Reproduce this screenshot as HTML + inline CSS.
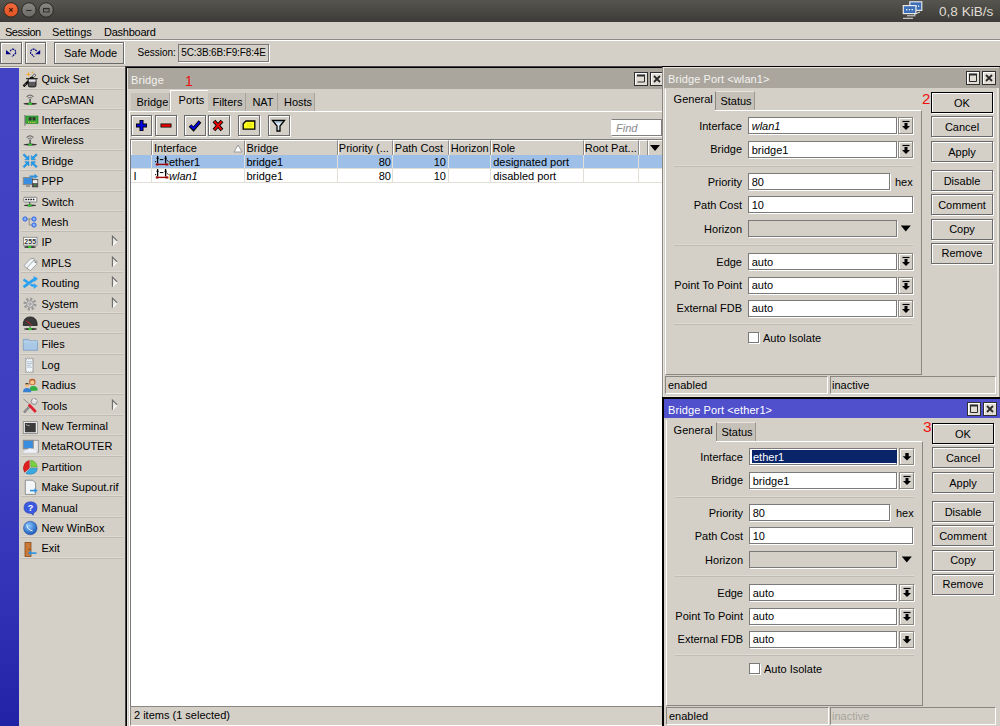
<!DOCTYPE html><html><head><meta charset="utf-8"><style>
*{margin:0;padding:0;box-sizing:border-box}
html,body{width:1000px;height:726px;overflow:hidden;background:#d4d0c8;font-family:"Liberation Sans", sans-serif;font-size:11px;color:#000}
.t{position:absolute;white-space:pre;line-height:12px;height:12px}
.btn{position:absolute;border:1px solid #6a6a6a;box-shadow:inset 1px 1px 0 #fff,1px 1px 0 #fff;background:#d4d0c8}
.inp{position:absolute;background:#fff;border:1px solid #7a7a7a;box-shadow:1px 1px 0 #fff}
.sep{position:absolute;height:1px;background:#c0bcb4;box-shadow:0 -1px 0 #dddad3}
</style></head><body>
<div style="position:absolute;left:0px;top:0px;width:1000px;height:22px;background:linear-gradient(#57554f,#3c3b37)"></div>
<svg style="position:absolute;left:0;top:0" width="60" height="21"><defs><linearGradient id="rc" x1="0" y1="0" x2="0" y2="1"><stop offset="0" stop-color="#f06a3e"/><stop offset="1" stop-color="#e2521f"/></linearGradient><linearGradient id="gc" x1="0" y1="0" x2="0" y2="1"><stop offset="0" stop-color="#8a8985"/><stop offset="1" stop-color="#6a6965"/></linearGradient></defs><circle cx="11" cy="9.9" r="7.2" fill="url(#rc)" stroke="#2a2926" stroke-width="1"/><path d="M9.3 8.2l3.4 3.4M12.7 8.2l-3.4 3.4" stroke="#3a1a0a" stroke-width="1.1"/><circle cx="28.9" cy="10" r="7.2" fill="url(#gc)" stroke="#2a2926" stroke-width="1"/><path d="M26.2 10.5h5.4" stroke="#2e2d2a" stroke-width="1.1"/><circle cx="46.1" cy="10" r="7.2" fill="url(#gc)" stroke="#2a2926" stroke-width="1"/><rect x="43.5" y="8.5" width="5.6" height="3.4" fill="none" stroke="#2e2d2a" stroke-width="1"/><path d="M43.5 8.6h5.6" stroke="#2e2d2a" stroke-width="1.4"/></svg>
<svg style="position:absolute;left:900px;top:0px" width="26" height="21"><rect x="9.8" y="1.8" width="12" height="8.6" fill="#3d6fb8" stroke="#e4e4e4" stroke-width="1.2"/><path d="M13 6.2h1.2M15.5 6.2h1.2M18 6.2h1.2" stroke="#fff" stroke-width="1.2"/><rect x="3.3" y="5.6" width="12.6" height="8" fill="#3d6fb8" stroke="#e8e8e8" stroke-width="1.2"/><path d="M6 9.6h1.3M8.8 9.6h1.3M11.6 9.6h1.3" stroke="#fff" stroke-width="1.3"/><path d="M3 18.3h10M7 15.8h8.5M14 14.5l6-2.5" stroke="#e0e0e0" stroke-width="1"/></svg>
<div class="t" style="left:939px;top:4.5px;color:#dfdbd2;font-size:13.6px;line-height:14px;height:14px">0,8 KiB/s</div>
<div style="position:absolute;left:0px;top:39px;width:1000px;height:1px;background:#8c8a86"></div>
<div style="position:absolute;left:0px;top:40px;width:1000px;height:1px;background:#fff"></div>
<div class="t" style="left:5px;top:26px;letter-spacing:-0.5px">Session</div>
<div class="t" style="left:52px;top:26px;">Settings</div>
<div class="t" style="left:104px;top:26px;letter-spacing:-0.25px">Dashboard</div>
<div class="btn" style="left:0px;top:42px;width:22px;height:22px;box-shadow:inset 1px 1px 0 #fff,1px 0 0 #fff"></div>
<div class="btn" style="left:25px;top:42px;width:21px;height:22px;box-shadow:inset 1px 1px 0 #fff,1px 0 0 #fff"></div>
<svg style="position:absolute;left:0;top:40px" width="50" height="26"><path d="M6 10 L6 14.3 L11.2 14.3 Z" fill="#000080"/><path d="M10.2 11.2 Q11.5 9 13 9.2 Q15.6 9.6 15.6 12 L15.6 13.2 L12 16.8" fill="none" stroke="#000080" stroke-width="1.2" stroke-dasharray="2 0.7"/><path d="M40.2 10 L40.2 14.3 L35 14.3 Z" fill="#000080"/><path d="M36.6 11.2 Q35 9 33.5 9.2 Q30.6 9.6 30.6 12 L30.6 13.2 L34.2 16.8" fill="none" stroke="#000080" stroke-width="1.2" stroke-dasharray="2 0.7"/></svg>
<div class="btn" style="left:54px;top:42px;width:70px;height:22px;box-shadow:inset 1px 1px 0 #fff,1px 0 0 #fff"></div>
<div class="t" style="left:64px;top:47px;">Safe Mode</div>
<div class="t" style="left:137.5px;top:47.4px;font-size:10px">Session:</div>
<div style="position:absolute;left:178px;top:44px;width:91px;height:18px;border:1px solid #7a7a7a;box-shadow:1px 1px 0 #fff"></div>
<div class="t" style="left:181.3px;top:47.4px;font-size:10px;letter-spacing:-0.13px">5C:3B:6B:F9:F8:4E</div>
<div style="position:absolute;left:0px;top:66px;width:1000px;height:1px;background:#9c9890"></div>
<div style="position:absolute;left:0px;top:67px;width:1000px;height:1px;background:#ebe8e2"></div>
<div style="position:absolute;left:0px;top:68px;width:19px;height:658px;background:linear-gradient(#4343c5 0%,#3e3ec0 60%,#3030b5 83%,#2222a6 100%)"></div>
<div class="t" style="left:41.5px;top:73.1px;">Quick Set</div>
<div style="position:absolute;left:21px;top:88px;width:102px;height:1px;background:#dddad3"></div>
<div style="position:absolute;left:21px;top:89px;width:102px;height:1px;background:#c0bcb4"></div>
<div class="ic" data-k="0" style="position:absolute;left:23px;top:71.6px;width:16px;height:15px"></div>
<div class="t" style="left:41.5px;top:93.5px;">CAPsMAN</div>
<div style="position:absolute;left:21px;top:108px;width:102px;height:1px;background:#dddad3"></div>
<div style="position:absolute;left:21px;top:109px;width:102px;height:1px;background:#c0bcb4"></div>
<div class="ic" data-k="1" style="position:absolute;left:23px;top:92.0px;width:16px;height:15px"></div>
<div class="t" style="left:41.5px;top:113.9px;">Interfaces</div>
<div style="position:absolute;left:21px;top:128px;width:102px;height:1px;background:#dddad3"></div>
<div style="position:absolute;left:21px;top:129px;width:102px;height:1px;background:#c0bcb4"></div>
<div class="ic" data-k="2" style="position:absolute;left:23px;top:112.4px;width:16px;height:15px"></div>
<div class="t" style="left:41.5px;top:134.3px;">Wireless</div>
<div style="position:absolute;left:21px;top:149px;width:102px;height:1px;background:#dddad3"></div>
<div style="position:absolute;left:21px;top:150px;width:102px;height:1px;background:#c0bcb4"></div>
<div class="ic" data-k="3" style="position:absolute;left:23px;top:132.8px;width:16px;height:15px"></div>
<div class="t" style="left:41.5px;top:154.7px;">Bridge</div>
<div style="position:absolute;left:21px;top:169px;width:102px;height:1px;background:#dddad3"></div>
<div style="position:absolute;left:21px;top:170px;width:102px;height:1px;background:#c0bcb4"></div>
<div class="ic" data-k="4" style="position:absolute;left:23px;top:153.2px;width:16px;height:15px"></div>
<div class="t" style="left:41.5px;top:175.1px;">PPP</div>
<div style="position:absolute;left:21px;top:190px;width:102px;height:1px;background:#dddad3"></div>
<div style="position:absolute;left:21px;top:191px;width:102px;height:1px;background:#c0bcb4"></div>
<div class="ic" data-k="5" style="position:absolute;left:23px;top:173.6px;width:16px;height:15px"></div>
<div class="t" style="left:41.5px;top:195.5px;">Switch</div>
<div style="position:absolute;left:21px;top:210px;width:102px;height:1px;background:#dddad3"></div>
<div style="position:absolute;left:21px;top:211px;width:102px;height:1px;background:#c0bcb4"></div>
<div class="ic" data-k="6" style="position:absolute;left:23px;top:194.0px;width:16px;height:15px"></div>
<div class="t" style="left:41.5px;top:215.9px;">Mesh</div>
<div style="position:absolute;left:21px;top:230px;width:102px;height:1px;background:#dddad3"></div>
<div style="position:absolute;left:21px;top:231px;width:102px;height:1px;background:#c0bcb4"></div>
<div class="ic" data-k="7" style="position:absolute;left:23px;top:214.4px;width:16px;height:15px"></div>
<div class="t" style="left:41.5px;top:236.3px;">IP</div>
<div style="position:absolute;left:21px;top:251px;width:102px;height:1px;background:#dddad3"></div>
<div style="position:absolute;left:21px;top:252px;width:102px;height:1px;background:#c0bcb4"></div>
<svg style="position:absolute;left:110px;top:235.3px" width="10" height="13"><path d="M2.4 1.1 L7.2 5.9 L2.4 10.8 Z" fill="#ebe8e2"/><path d="M7.2 5.9 L2.6 10.6" stroke="#fff" stroke-width="1.1"/><path d="M2.4 10.8 L2.4 1.1 L7.2 5.9" fill="none" stroke="#6a6a6a" stroke-width="1.1"/></svg>
<div class="ic" data-k="8" style="position:absolute;left:23px;top:234.8px;width:16px;height:15px"></div>
<div class="t" style="left:41.5px;top:256.7px;">MPLS</div>
<div style="position:absolute;left:21px;top:271px;width:102px;height:1px;background:#dddad3"></div>
<div style="position:absolute;left:21px;top:272px;width:102px;height:1px;background:#c0bcb4"></div>
<svg style="position:absolute;left:110px;top:255.7px" width="10" height="13"><path d="M2.4 1.1 L7.2 5.9 L2.4 10.8 Z" fill="#ebe8e2"/><path d="M7.2 5.9 L2.6 10.6" stroke="#fff" stroke-width="1.1"/><path d="M2.4 10.8 L2.4 1.1 L7.2 5.9" fill="none" stroke="#6a6a6a" stroke-width="1.1"/></svg>
<div class="ic" data-k="9" style="position:absolute;left:23px;top:255.2px;width:16px;height:15px"></div>
<div class="t" style="left:41.5px;top:277.1px;">Routing</div>
<div style="position:absolute;left:21px;top:292px;width:102px;height:1px;background:#dddad3"></div>
<div style="position:absolute;left:21px;top:293px;width:102px;height:1px;background:#c0bcb4"></div>
<svg style="position:absolute;left:110px;top:276.1px" width="10" height="13"><path d="M2.4 1.1 L7.2 5.9 L2.4 10.8 Z" fill="#ebe8e2"/><path d="M7.2 5.9 L2.6 10.6" stroke="#fff" stroke-width="1.1"/><path d="M2.4 10.8 L2.4 1.1 L7.2 5.9" fill="none" stroke="#6a6a6a" stroke-width="1.1"/></svg>
<div class="ic" data-k="10" style="position:absolute;left:23px;top:275.6px;width:16px;height:15px"></div>
<div class="t" style="left:41.5px;top:297.5px;">System</div>
<div style="position:absolute;left:21px;top:312px;width:102px;height:1px;background:#dddad3"></div>
<div style="position:absolute;left:21px;top:313px;width:102px;height:1px;background:#c0bcb4"></div>
<svg style="position:absolute;left:110px;top:296.5px" width="10" height="13"><path d="M2.4 1.1 L7.2 5.9 L2.4 10.8 Z" fill="#ebe8e2"/><path d="M7.2 5.9 L2.6 10.6" stroke="#fff" stroke-width="1.1"/><path d="M2.4 10.8 L2.4 1.1 L7.2 5.9" fill="none" stroke="#6a6a6a" stroke-width="1.1"/></svg>
<div class="ic" data-k="11" style="position:absolute;left:23px;top:296.0px;width:16px;height:15px"></div>
<div class="t" style="left:41.5px;top:317.9px;">Queues</div>
<div style="position:absolute;left:21px;top:332px;width:102px;height:1px;background:#dddad3"></div>
<div style="position:absolute;left:21px;top:333px;width:102px;height:1px;background:#c0bcb4"></div>
<div class="ic" data-k="12" style="position:absolute;left:23px;top:316.4px;width:16px;height:15px"></div>
<div class="t" style="left:41.5px;top:338.3px;">Files</div>
<div style="position:absolute;left:21px;top:353px;width:102px;height:1px;background:#dddad3"></div>
<div style="position:absolute;left:21px;top:354px;width:102px;height:1px;background:#c0bcb4"></div>
<div class="ic" data-k="13" style="position:absolute;left:23px;top:336.8px;width:16px;height:15px"></div>
<div class="t" style="left:41.5px;top:358.7px;">Log</div>
<div style="position:absolute;left:21px;top:373px;width:102px;height:1px;background:#dddad3"></div>
<div style="position:absolute;left:21px;top:374px;width:102px;height:1px;background:#c0bcb4"></div>
<div class="ic" data-k="14" style="position:absolute;left:23px;top:357.2px;width:16px;height:15px"></div>
<div class="t" style="left:41.5px;top:379.1px;">Radius</div>
<div style="position:absolute;left:21px;top:393px;width:102px;height:1px;background:#dddad3"></div>
<div style="position:absolute;left:21px;top:394px;width:102px;height:1px;background:#c0bcb4"></div>
<div class="ic" data-k="15" style="position:absolute;left:23px;top:377.6px;width:16px;height:15px"></div>
<div class="t" style="left:41.5px;top:399.5px;">Tools</div>
<div style="position:absolute;left:21px;top:414px;width:102px;height:1px;background:#dddad3"></div>
<div style="position:absolute;left:21px;top:415px;width:102px;height:1px;background:#c0bcb4"></div>
<svg style="position:absolute;left:110px;top:398.5px" width="10" height="13"><path d="M2.4 1.1 L7.2 5.9 L2.4 10.8 Z" fill="#ebe8e2"/><path d="M7.2 5.9 L2.6 10.6" stroke="#fff" stroke-width="1.1"/><path d="M2.4 10.8 L2.4 1.1 L7.2 5.9" fill="none" stroke="#6a6a6a" stroke-width="1.1"/></svg>
<div class="ic" data-k="16" style="position:absolute;left:23px;top:398.0px;width:16px;height:15px"></div>
<div class="t" style="left:41.5px;top:419.9px;">New Terminal</div>
<div style="position:absolute;left:21px;top:434px;width:102px;height:1px;background:#dddad3"></div>
<div style="position:absolute;left:21px;top:435px;width:102px;height:1px;background:#c0bcb4"></div>
<div class="ic" data-k="17" style="position:absolute;left:23px;top:418.4px;width:16px;height:15px"></div>
<div class="t" style="left:41.5px;top:440.3px;">MetaROUTER</div>
<div style="position:absolute;left:21px;top:455px;width:102px;height:1px;background:#dddad3"></div>
<div style="position:absolute;left:21px;top:456px;width:102px;height:1px;background:#c0bcb4"></div>
<div class="ic" data-k="18" style="position:absolute;left:23px;top:438.8px;width:16px;height:15px"></div>
<div class="t" style="left:41.5px;top:460.7px;">Partition</div>
<div style="position:absolute;left:21px;top:475px;width:102px;height:1px;background:#dddad3"></div>
<div style="position:absolute;left:21px;top:476px;width:102px;height:1px;background:#c0bcb4"></div>
<div class="ic" data-k="19" style="position:absolute;left:23px;top:459.2px;width:16px;height:15px"></div>
<div class="t" style="left:41.5px;top:481.1px;">Make Supout.rif</div>
<div style="position:absolute;left:21px;top:495px;width:102px;height:1px;background:#dddad3"></div>
<div style="position:absolute;left:21px;top:496px;width:102px;height:1px;background:#c0bcb4"></div>
<div class="ic" data-k="20" style="position:absolute;left:23px;top:479.6px;width:16px;height:15px"></div>
<div class="t" style="left:41.5px;top:501.5px;">Manual</div>
<div style="position:absolute;left:21px;top:516px;width:102px;height:1px;background:#dddad3"></div>
<div style="position:absolute;left:21px;top:517px;width:102px;height:1px;background:#c0bcb4"></div>
<div class="ic" data-k="21" style="position:absolute;left:23px;top:500.0px;width:16px;height:15px"></div>
<div class="t" style="left:41.5px;top:521.9px;">New WinBox</div>
<div style="position:absolute;left:21px;top:536px;width:102px;height:1px;background:#dddad3"></div>
<div style="position:absolute;left:21px;top:537px;width:102px;height:1px;background:#c0bcb4"></div>
<div class="ic" data-k="22" style="position:absolute;left:23px;top:520.4px;width:16px;height:15px"></div>
<div class="t" style="left:41.5px;top:542.3px;">Exit</div>
<div style="position:absolute;left:21px;top:557px;width:102px;height:1px;background:#dddad3"></div>
<div style="position:absolute;left:21px;top:558px;width:102px;height:1px;background:#c0bcb4"></div>
<div class="ic" data-k="23" style="position:absolute;left:23px;top:540.8px;width:16px;height:15px"></div>
<svg style="position:absolute;left:0;top:0" width="60" height="570"><g transform="translate(20,68.6)"><path d="M8.5 3.2 L9.3 5.2 L11.2 5.8 L9.3 6.5 L8.5 8.5 L7.7 6.5 L5.8 5.8 L7.7 5.2 Z" fill="#f0a830"/><circle cx="12.3" cy="3.8" r="0.8" fill="#f0a030"/><path d="M3.6 17.6 L15.4 5.8" stroke="#111" stroke-width="2.3"/><path d="M4.6 16.6 L5.4 15.8 M6.6 14.6 L7.4 13.8" stroke="#fff" stroke-width="0.8"/><path d="M12.9 8.3 L15.2 6" stroke="#888" stroke-width="2.2"/><path d="M13 8.2 L15.1 6.1" stroke="#fff" stroke-width="1"/><path d="M6 10 h11.7" stroke="#333" stroke-width="1.2"/><circle cx="10.5" cy="9.3" r="0.9" fill="#111"/><circle cx="12.6" cy="9.3" r="0.9" fill="#111"/><path d="M8.3 10.5 h7.7 v6.3 q0 1.5 -1.5 1.5 h-4.7 q-1.5 0 -1.5 -1.5 z" fill="#5a5a5a" stroke="#111" stroke-width="0.9"/><rect x="8.8" y="10.8" width="6.8" height="2.3" fill="#e8e8f0"/><path d="M3.6 17.6 L7.8 13.4" stroke="#111" stroke-width="2.3"/><path d="M4.6 16.6 L5.4 15.8" stroke="#fff" stroke-width="0.8"/></g><g transform="translate(20,89.0)"><path d="M6.6 7.8 Q10 4.2 13.4 7.8" fill="none" stroke="#666" stroke-width="1.1"/><path d="M7.8 9.2 Q10 7 12.2 9.2" fill="none" stroke="#777" stroke-width="1"/><rect x="9.3" y="9.8" width="1.6" height="4.6" fill="#555"/><ellipse cx="10.25" cy="14.8" rx="6.75" ry="1" fill="#1a1a1a" opacity="0.85"/><ellipse cx="10.1" cy="14.8" rx="1.8" ry="1.2" fill="#2ecc2e"/></g><g transform="translate(20,129.8)"><path d="M6.6 7.8 Q10 4.2 13.4 7.8" fill="none" stroke="#666" stroke-width="1.1"/><path d="M7.8 9.2 Q10 7 12.2 9.2" fill="none" stroke="#777" stroke-width="1"/><rect x="9.3" y="9.8" width="1.6" height="4.6" fill="#555"/><ellipse cx="10.25" cy="14.8" rx="6.75" ry="1" fill="#1a1a1a" opacity="0.85"/><ellipse cx="10.1" cy="14.8" rx="1.8" ry="1.2" fill="#2ecc2e"/></g><g transform="translate(20,109.4)"><rect x="4.2" y="5.9" width="1.3" height="10.3" fill="#aaa" stroke="#777" stroke-width="0.4"/><rect x="5.8" y="6.6" width="12.2" height="7.5" fill="#3aa83a" stroke="#1e7a1e" stroke-width="0.6"/><rect x="8.8" y="7.8" width="2.8" height="3.2" fill="#333"/><rect x="12.6" y="7.8" width="2.8" height="3.2" fill="#333"/><path d="M8 13 h8.5" stroke="#e8c040" stroke-width="1.1" stroke-dasharray="1.1 1"/></g><g transform="translate(20,150.2)"><g transform="translate(6,6.6) rotate(180)"><path d="M-3 -3 L1.2 -3 L-0.3 -1.5 L3 1.8 L1.8 3 L-1.5 -0.3 L-3 1.2 Z" fill="#20a0f0" stroke="#1878c8" stroke-width="0.5"/></g><g transform="translate(14.3,6.6) rotate(270)"><path d="M-3 -3 L1.2 -3 L-0.3 -1.5 L3 1.8 L1.8 3 L-1.5 -0.3 L-3 1.2 Z" fill="#20a0f0" stroke="#1878c8" stroke-width="0.5"/></g><g transform="translate(6,14.5) rotate(90)"><path d="M-3 -3 L1.2 -3 L-0.3 -1.5 L3 1.8 L1.8 3 L-1.5 -0.3 L-3 1.2 Z" fill="#20a0f0" stroke="#1878c8" stroke-width="0.5"/></g><g transform="translate(14.3,14.5) rotate(0)"><path d="M-3 -3 L1.2 -3 L-0.3 -1.5 L3 1.8 L1.8 3 L-1.5 -0.3 L-3 1.2 Z" fill="#20a0f0" stroke="#1878c8" stroke-width="0.5"/></g></g><g transform="translate(20,170.6)"><rect x="3.3" y="7" width="9.5" height="7" fill="#3a8ee0" stroke="#888" stroke-width="1"/><path d="M6 15.5 h4" stroke="#777" stroke-width="1.2"/><rect x="12.3" y="9" width="5.6" height="7.4" fill="#555" stroke="#333" stroke-width="0.5"/><rect x="12.8" y="9.5" width="4.6" height="3" fill="#eee"/><circle cx="15.2" cy="14.4" r="0.7" fill="#2c2"/><path d="M9.5 5.8 h5.5" stroke="#2a90e0" stroke-width="1.8"/><path d="M14.5 3.2 L18 5.8 L14.5 8.4 Z" fill="#2a90e0"/></g><g transform="translate(20,191.0)"><rect x="3.8" y="6.3" width="13" height="4.7" rx="0.8" fill="#fff" stroke="#777" stroke-width="0.9"/><path d="M5.3 8.6 h10" stroke="#111" stroke-width="1.5" stroke-dasharray="1.6 0.9"/><rect x="9.3" y="11" width="0.9" height="3.3" fill="#333"/><ellipse cx="10.0" cy="14.4" rx="6.0" ry="1" fill="#1a1a1a" opacity="0.85"/><ellipse cx="9.7" cy="14.4" rx="1.8" ry="1.2" fill="#2ecc2e"/></g><g transform="translate(20,211.4)"><path d="M5 7.6 H14 M9.2 7.6 V13.6 H14" fill="none" stroke="#888" stroke-width="0.9"/><circle cx="5" cy="7.6" r="2.1" fill="#8ab4f8" stroke="#2a5ee8" stroke-width="1"/><circle cx="14" cy="7.6" r="2.1" fill="#8ab4f8" stroke="#2a5ee8" stroke-width="1"/><circle cx="14" cy="13.6" r="2.1" fill="#8ab4f8" stroke="#2a5ee8" stroke-width="1"/></g><g transform="translate(20,231.8)"><rect x="3.5" y="5.5" width="13.5" height="7.8" fill="#fff" stroke="#888" stroke-width="0.9"/><text x="10.2" y="12" font-family="Liberation Sans" font-weight="bold" font-size="7" text-anchor="middle" fill="#333">255</text><ellipse cx="10.0" cy="15.2" rx="6.0" ry="1" fill="#1a1a1a" opacity="0.85"/><ellipse cx="9.7" cy="15.2" rx="1.8" ry="1.2" fill="#2ecc2e"/></g><g transform="translate(20,252.2)"><path d="M4 13.5 L10.5 6.5 L14 6.3 L14 9.6 L7.6 16.8 Z" fill="#eef4f8" stroke="#888" stroke-width="0.7"/><path d="M6.8 15.8 L13.3 8.8 L16.8 8.6 L16.8 11.9 L10.4 18.5 Z" fill="#f4f8fb" stroke="#888" stroke-width="0.7"/><circle cx="15.4" cy="10" r="0.8" fill="#666"/></g><g transform="translate(20,272.6)"><path d="M3.5 14.5 L14.5 6.5" stroke="#2aa0f0" stroke-width="2.6"/><path d="M13.5 3.5 L18 6 L14.5 9.5 Z" fill="#2aa0f0"/><path d="M3.5 6.8 L8 10 M10.5 12 L14.5 13.5" stroke="#2aa0f0" stroke-width="2.4"/><path d="M13.8 10.7 L17.8 13.5 L13.8 16.5 Z" fill="#3aa8f0"/></g><g transform="translate(20,293.0)"><circle cx="10" cy="11" r="5.2" fill="none" stroke="#9a9a9a" stroke-width="2.6" stroke-dasharray="2.2 1.8"/><circle cx="10" cy="11" r="3.4" fill="#d8d8d8" stroke="#888" stroke-width="0.9"/><circle cx="10" cy="11" r="1.3" fill="#ccc" stroke="#777" stroke-width="0.6"/></g><g transform="translate(20,313.4)"><path d="M3.2 12 Q3.2 3.5 10.2 3.5 Q17.2 3.5 17.2 12 Z" fill="#3a3a3a" stroke="#1a1a1a" stroke-width="0.8"/><path d="M6.5 7.5 L11.5 11.8" stroke="#e02020" stroke-width="1.2" stroke-dasharray="1 0.8"/><rect x="9.5" y="12" width="1.2" height="2.5" fill="#666"/><ellipse cx="10.5" cy="15.6" rx="6.5" ry="1" fill="#1a1a1a" opacity="0.85"/><ellipse cx="10.1" cy="15.6" rx="1.8" ry="1.2" fill="#2ecc2e"/></g><g transform="translate(20,333.8)"><path d="M3.3 5.5 h5 l1.5 1.5 h7.8 v9.5 h-14.3 z" fill="#a9c8e6" stroke="#7b9cc0" stroke-width="0.8"/><path d="M3.3 8.2 h14.3" stroke="#c8dcf0" stroke-width="0.8"/></g><g transform="translate(20,354.2)"><path d="M5.8 4 l0.9 0.8 l0.9 -0.8 l0.9 0.8 l0.9 -0.8 l0.9 0.8 l0.9 -0.8 l0.9 0.8 l0.9 -0.8 v14.4 l-0.9 -0.8 l-0.9 0.8 l-0.9 -0.8 l-0.9 0.8 l-0.9 -0.8 l-0.9 0.8 l-0.9 -0.8 l-0.9 0.8 z" fill="#f0f6fa" stroke="#888" stroke-width="0.7"/><path d="M7 7.5 h5.5 M7 9.3 h5.5 M7 11.1 h4 M7 12.9 h5" stroke="#9ab" stroke-width="0.7"/></g><g transform="translate(20,374.6)"><circle cx="12.3" cy="7.3" r="3.2" fill="#b85a28"/><circle cx="12.3" cy="7.8" r="2.2" fill="#f4c890"/><path d="M9.5 16.5 Q9.5 11.5 13 11.5 Q17.8 11.5 17.8 16 Z" fill="#30b040"/><circle cx="7" cy="10.5" r="2.2" fill="#f0c088"/><path d="M4.8 9.6 Q7 7 9.2 9.6" fill="#333"/><path d="M3 17.6 Q3 13.5 7 13.5 Q11.2 13.5 11.2 17.6 Z" fill="#3a80d0"/></g><g transform="translate(20,395.0)"><path d="M4 17.5 L10.5 10.5" stroke="#777" stroke-width="2.4"/><path d="M4 17.5 L10.5 10.5" stroke="#ddd" stroke-width="0.9" stroke-dasharray="1 1"/><path d="M10 9.5 L3.5 4" stroke="#888" stroke-width="0.9"/><path d="M8.8 9.5 L15.8 17" stroke="#e02030" stroke-width="2.6"/><circle cx="14.2" cy="6.5" r="3" fill="#ddd" stroke="#888" stroke-width="0.9"/><path d="M13.2 3.6 L14.5 6 L16.8 5.2" stroke="#eee" stroke-width="1.2" fill="none"/></g><g transform="translate(20,415.4)"><rect x="3.3" y="6.2" width="14" height="12" fill="#fff" stroke="#888" stroke-width="0.9"/><rect x="4.8" y="7.5" width="11" height="9.4" fill="#3c3c3c"/><path d="M6 9.2 l1.6 0.8 M8 10.2 h1.5" stroke="#ccc" stroke-width="0.8"/></g><g transform="translate(20,435.8)"><rect x="3.3" y="4.5" width="10" height="8.5" fill="#3a8ee0" stroke="#888" stroke-width="1"/><rect x="13.3" y="4.5" width="5" height="12" fill="#e8e8e8" stroke="#888" stroke-width="0.8"/><path d="M3 17.3 Q4 13.5 7 14 Q9 11.5 12 13 Q16 12.5 17.5 17.3 Z" fill="#f0f0f8" stroke="#c8c8d0" stroke-width="0.5"/></g><g transform="translate(20,456.2)"><path d="M9.3 4.2 L9.3 12 L4.5 16 Q2 11 5 7 Q6.5 5 9.3 4.2 Z" fill="#e02020" stroke="#a01010" stroke-width="0.5"/><path d="M10.8 4 Q16.5 5 17.3 10.8 L10.8 10.8 Z" fill="#7ad040" stroke="#4a9a20" stroke-width="0.5"/><path d="M17.3 12 Q17 17.5 10.5 18 Q7 18 5.8 17 L10.5 12 Z" fill="#38a8e0" stroke="#1a70b0" stroke-width="0.5"/></g><g transform="translate(20,476.6)"><path d="M5.3 3.6 h7.5 l2.8 2.8 v11.4 h-10.3 z" fill="#f2f6f9" stroke="#888" stroke-width="0.9"/><path d="M10 14 h5" stroke="#2a90e0" stroke-width="1.6"/><path d="M14.5 11.6 L17.6 14 L14.5 16.4 Z" fill="#2a90e0"/></g><g transform="translate(20,497.0)"><path d="M10.5 4.8 Q17 4.8 17 10.8 Q17 15 13.5 16 L13.2 18.2 L11.2 16.4 Q4 16.5 4 10.8 Q4 4.8 10.5 4.8 Z" fill="#3a5ae0" stroke="#2a3ab0" stroke-width="0.6"/><text x="10.4" y="14" font-family="Liberation Sans" font-weight="bold" font-size="9" text-anchor="middle" fill="#fff">?</text></g><g transform="translate(20,517.4)"><defs><radialGradient id="wb" cx="40%" cy="35%" r="65%"><stop offset="0" stop-color="#8ac8ff"/><stop offset="1" stop-color="#1a58b8"/></radialGradient></defs><circle cx="10.3" cy="10.6" r="6.8" fill="url(#wb)" stroke="#1a48a0" stroke-width="0.5"/><path d="M7 7 Q6.5 12 12.5 13.5" fill="none" stroke="#fff" stroke-width="0.9"/></g><g transform="translate(20,537.8)"><rect x="5" y="4.6" width="6" height="14" fill="#c87838" stroke="#8a4a18" stroke-width="0.8"/><circle cx="9.3" cy="11.5" r="0.6" fill="#333"/><path d="M10 15.3 h6.5" stroke="#2a90e0" stroke-width="1.6"/><path d="M11 12.8 L8 15.3 L11 17.8 Z" fill="#2a90e0"/></g></svg>
<div style="position:absolute;left:125px;top:66px;width:540px;height:660px;background:#444"></div>
<div style="position:absolute;left:126px;top:67px;width:539px;height:659px;background:#000"></div>
<div style="position:absolute;left:127px;top:68px;width:538px;height:658px;background:#e4e1db"></div>
<div style="position:absolute;left:128px;top:68px;width:536px;height:658px;background:#d4d0c8"></div>
<div style="position:absolute;left:128px;top:68px;width:536px;height:21px;background:#aaa69e"></div>
<div class="t" style="left:131px;top:74px;color:#f4f2ee;letter-spacing:0.2px">Bridge</div>
<div class="t" style="left:185px;top:76px;color:#ee1111;font-size:14px;line-height:14px;height:14px;top:74px">1</div>
<div style="position:absolute;left:634px;top:72px;width:14px;height:14px;border:1px solid #303030;background:#e2ded6;box-shadow:inset 1px 1px 0 #fff"></div>
<svg style="position:absolute;left:634px;top:72px" width="14" height="14"><path d="M3.5 3.5h7v6.5h-7" fill="none" stroke="#2a2a2a" stroke-width="1"/><path d="M3 3.5h8" stroke="#2a2a2a" stroke-width="2"/></svg>
<div style="position:absolute;left:650px;top:72px;width:14px;height:14px;border:1px solid #303030;background:#e2ded6;box-shadow:inset 1px 1px 0 #fff"></div>
<svg style="position:absolute;left:650px;top:72px" width="14" height="14"><path d="M4 4l6 6M10 4l-6 6" stroke="#2a2a2a" stroke-width="1.8"/></svg>
<div style="position:absolute;left:129px;top:111px;width:534px;height:1px;background:#fff"></div>
<div style="position:absolute;left:129px;top:111px;width:1px;height:615px;background:#fff"></div>
<div style="position:absolute;left:131px;top:93px;width:39px;height:18px;background:#c5c1b9;border-right:1px solid #a8a49c"></div>
<div class="t" style="left:136.5px;top:96px;">Bridge</div>
<div style="position:absolute;left:208px;top:93px;width:38px;height:18px;background:#c5c1b9;border-right:1px solid #a8a49c"></div>
<div class="t" style="left:212.5px;top:96px;">Filters</div>
<div style="position:absolute;left:246px;top:93px;width:32px;height:18px;background:#c5c1b9;border-right:1px solid #a8a49c"></div>
<div class="t" style="left:252.4px;top:96px;">NAT</div>
<div style="position:absolute;left:278px;top:93px;width:37px;height:18px;background:#c5c1b9;border-right:1px solid #a8a49c"></div>
<div class="t" style="left:284px;top:96px;">Hosts</div>
<div style="position:absolute;left:170px;top:90px;width:38px;height:22px;background:#d4d0c8;border-left:1px solid #fff;border-top:1px solid #fff"></div>
<div class="t" style="left:178.6px;top:94px;">Ports</div>
<div class="btn" style="left:130.6px;top:115px;width:21.5px;height:21px"></div>
<div class="btn" style="left:155px;top:115px;width:21.5px;height:21px"></div>
<div class="btn" style="left:184.4px;top:115px;width:21.5px;height:21px"></div>
<div class="btn" style="left:208px;top:115px;width:21.5px;height:21px"></div>
<div class="btn" style="left:238px;top:115px;width:21.5px;height:21px"></div>
<div class="btn" style="left:268px;top:115px;width:21.5px;height:21px"></div>
<svg style="position:absolute;left:130px;top:115px" width="170" height="22"><path d="M6 10.5h11M11.5 5v11" stroke="#000" stroke-width="4"/><path d="M6.8 10.5h9.4M11.5 5.8v9.4" stroke="#0000ee" stroke-width="2.2"/><rect x="30.5" y="8.5" width="11" height="4" fill="#000"/><rect x="31.3" y="9.3" width="9.4" height="2.4" fill="#ee0000"/><path d="M60 10.5 L63.5 14 L70 6.5" fill="none" stroke="#000" stroke-width="3.6"/><path d="M60.5 10.8 L63.5 13.6 L69.6 6.9" fill="none" stroke="#0000dd" stroke-width="2"/><path d="M84 6l8 9M92 6l-8 9" stroke="#000" stroke-width="3.6"/><path d="M84.4 6.4l7.2 8.2M91.6 6.4l-7.2 8.2" stroke="#ee0000" stroke-width="2"/><path d="M113.2 8.8 L116 6 L124.8 6 L124.8 14.2 L113.2 14.2 Z" fill="#ffff20" stroke="#000" stroke-width="1.3"/><path d="M117 9h5M117 11h5" stroke="#d8d800" stroke-width="0.8"/><path d="M142.5 5.5 L154.5 5.5 L150 11 L150 16 L147 16 L147 11 Z" fill="#dfe8f0" stroke="#000" stroke-width="1.3"/><path d="M145 7h7" stroke="#7aa0c8" stroke-width="1"/></svg>
<div style="position:absolute;left:611px;top:119px;width:51px;height:17px;background:#fff;border:1px solid #808080;border-left-color:#fff;box-shadow:1px 1px 0 #fff"></div>
<div class="t" style="left:616px;top:121.80000000000001px;color:#8a8a8a;font-style:italic">Find</div>
<div style="position:absolute;left:130px;top:139px;width:533px;height:568px;background:#fff;border-top:1px solid #7a7a7a;border-left:1px solid #7a7a7a"></div>
<div style="position:absolute;left:131px;top:140px;width:532px;height:15px;background:#d4d0c8"></div>
<div style="position:absolute;left:131px;top:140px;width:21px;height:15px;border-left:1px solid #fff;border-top:1px solid #fff;border-right:1px solid #8c8c8c"></div>
<div style="position:absolute;left:152px;top:140px;width:93px;height:15px;border-left:1px solid #fff;border-top:1px solid #fff;border-right:1px solid #8c8c8c"></div>
<div style="position:absolute;left:245px;top:140px;width:93px;height:15px;border-left:1px solid #fff;border-top:1px solid #fff;border-right:1px solid #8c8c8c"></div>
<div style="position:absolute;left:338px;top:140px;width:55px;height:15px;border-left:1px solid #fff;border-top:1px solid #fff;border-right:1px solid #8c8c8c"></div>
<div style="position:absolute;left:393px;top:140px;width:56px;height:15px;border-left:1px solid #fff;border-top:1px solid #fff;border-right:1px solid #8c8c8c"></div>
<div style="position:absolute;left:449px;top:140px;width:42px;height:15px;border-left:1px solid #fff;border-top:1px solid #fff;border-right:1px solid #8c8c8c"></div>
<div style="position:absolute;left:491px;top:140px;width:93px;height:15px;border-left:1px solid #fff;border-top:1px solid #fff;border-right:1px solid #8c8c8c"></div>
<div style="position:absolute;left:584px;top:140px;width:55px;height:15px;border-left:1px solid #fff;border-top:1px solid #fff;border-right:1px solid #8c8c8c"></div>
<div style="position:absolute;left:639px;top:140px;width:9px;height:15px;border-left:1px solid #fff;border-top:1px solid #fff;border-right:1px solid #8c8c8c"></div>
<div style="position:absolute;left:648px;top:140px;width:15px;height:15px;border-left:1px solid #fff;border-top:1px solid #fff;border-right:1px solid #8c8c8c"></div>
<div class="t" style="left:154px;top:141.6px;">Interface</div>
<div class="t" style="left:246.5px;top:141.6px;">Bridge</div>
<div class="t" style="left:338.8px;top:141.6px;">Priority (...</div>
<div class="t" style="left:394.8px;top:141.6px;">Path Cost</div>
<div class="t" style="left:450.8px;top:141.6px;">Horizon</div>
<div class="t" style="left:492.6px;top:141.6px;">Role</div>
<div class="t" style="left:584.8px;top:141.6px;">Root Pat...</div>
<svg style="position:absolute;left:233px;top:144px" width="10" height="9"><path d="M1 8 L5 1 L9 8 Z" fill="#fff" stroke="#9a9a9a" stroke-width="1"/></svg>
<svg style="position:absolute;left:648px;top:141px" width="14" height="13"><path d="M2 4 L12 4 L7 10 Z" fill="#000"/></svg>
<div style="position:absolute;left:131px;top:155px;width:532px;height:13.2px;background:#9dbfe8"></div>
<div style="position:absolute;left:131px;top:168.2px;width:532px;height:1px;background:#e2dfd8"></div>
<div style="position:absolute;left:131px;top:181.6px;width:532px;height:1px;background:#e2dfd8"></div>
<div style="position:absolute;left:151px;top:155px;width:1px;height:26.6px;background:#e2dfd8"></div>
<div style="position:absolute;left:244px;top:155px;width:1px;height:26.6px;background:#e2dfd8"></div>
<div style="position:absolute;left:337px;top:155px;width:1px;height:26.6px;background:#e2dfd8"></div>
<div style="position:absolute;left:392px;top:155px;width:1px;height:26.6px;background:#e2dfd8"></div>
<div style="position:absolute;left:448px;top:155px;width:1px;height:26.6px;background:#e2dfd8"></div>
<div style="position:absolute;left:490px;top:155px;width:1px;height:26.6px;background:#e2dfd8"></div>
<div style="position:absolute;left:583px;top:155px;width:1px;height:26.6px;background:#e2dfd8"></div>
<div style="position:absolute;left:638px;top:155px;width:1px;height:26.6px;background:#e2dfd8"></div>
<div class="t" style="left:169px;top:156.4px;">ether1</div>
<div class="t" style="left:246.5px;top:156.4px;">bridge1</div>
<div class="t" style="left:338px;width:53px;text-align:right;top:156.4px">80</div>
<div class="t" style="left:393px;width:53px;text-align:right;top:156.4px">10</div>
<div class="t" style="left:493.2px;top:156.4px;">designated port</div>
<svg style="position:absolute;left:155px;top:155.0px" width="15" height="12"><path d="M2.6 1v7.6M10.6 1v7.6" stroke="#000" stroke-width="1.3"/><path d="M1.6 3.4h2M9.6 3.4h2" stroke="#000" stroke-width="1.4"/><path d="M4.8 4.6h3.6" stroke="#000" stroke-width="1"/><circle cx="0.6" cy="6.6" r="0.6" fill="#000"/><path d="M11.3 4.5L13.5 6.8" stroke="#000" stroke-width="0.8"/><path d="M1 9.4h12" stroke="#9a0a0a" stroke-width="1.4"/><path d="M0.8 9.6h2.6M10.4 9.6h3" stroke="#9a0a0a" stroke-width="2"/></svg>
<div class="t" style="left:133.5px;top:169.8px;font-family:"Liberation Serif",serif;font-size:12px">I</div>
<div class="t" style="left:169px;top:169.8px;font-style:italic">wlan1</div>
<div class="t" style="left:246.5px;top:169.8px;">bridge1</div>
<div class="t" style="left:338px;width:53px;text-align:right;top:169.8px">80</div>
<div class="t" style="left:393px;width:53px;text-align:right;top:169.8px">10</div>
<div class="t" style="left:493.2px;top:169.8px;">disabled port</div>
<svg style="position:absolute;left:155px;top:168.4px" width="15" height="12"><path d="M2.6 1v7.6M10.6 1v7.6" stroke="#000" stroke-width="1.3"/><path d="M1.6 3.4h2M9.6 3.4h2" stroke="#000" stroke-width="1.4"/><path d="M4.8 4.6h3.6" stroke="#000" stroke-width="1"/><circle cx="0.6" cy="6.6" r="0.6" fill="#000"/><path d="M11.3 4.5L13.5 6.8" stroke="#000" stroke-width="0.8"/><path d="M1 9.4h12" stroke="#9a0a0a" stroke-width="1.4"/><path d="M0.8 9.6h2.6M10.4 9.6h3" stroke="#9a0a0a" stroke-width="2"/></svg>
<div style="position:absolute;left:130px;top:706px;width:533px;height:20px;background:#d4d0c8;border-left:1px solid #8a8680;border-top:1px solid #8a8680;border-bottom:1px solid #fff"></div>
<div class="t" style="left:134px;top:708.5px;">2 items (1 selected)</div>
<div style="position:absolute;left:662px;top:66px;width:338px;height:331px;background:#000"></div>
<div style="position:absolute;left:662px;top:67px;width:338px;height:330px;background:#8a8680"></div>
<div style="position:absolute;left:663px;top:67px;width:337px;height:330px;background:#e8e5df"></div>
<div style="position:absolute;left:664px;top:68px;width:333px;height:328px;background:#d4d0c8"></div>
<div style="position:absolute;left:998px;top:67px;width:2px;height:330px;background:#e4e1db;border-right:1px solid #9a968e"></div>
<div style="position:absolute;left:664px;top:68px;width:335px;height:20px;background:#aaa69e"></div>
<div class="t" style="left:668px;top:72.5px;color:#f4f2ee;letter-spacing:0.1px">Bridge Port &lt;wlan1&gt;</div>
<div style="position:absolute;left:966px;top:71.3px;width:14px;height:14px;border:1px solid #303030;background:#e2ded6;box-shadow:inset 1px 1px 0 #fff"></div>
<div style="position:absolute;left:982px;top:71.3px;width:14px;height:14px;border:1px solid #303030;background:#e2ded6;box-shadow:inset 1px 1px 0 #fff"></div>
<svg style="position:absolute;left:966px;top:71.3px" width="14" height="14"><path d="M3.5 3.5h7v7h-7z" fill="none" stroke="#2a2a2a" stroke-width="1"/><path d="M3 3.5h8" stroke="#2a2a2a" stroke-width="2"/></svg>
<svg style="position:absolute;left:982px;top:71.3px" width="14" height="14"><path d="M4 4l6 6M10 4l-6 6" stroke="#2a2a2a" stroke-width="1.8"/></svg>
<div style="position:absolute;left:715px;top:90.6px;width:40px;height:20px;background:#c5c1b9;border-left:1px solid #8a8680;border-top:1px solid #e8e5df;border-right:1px solid #9c9890"></div>
<div class="t" style="left:720.4px;top:94.7px;">Status</div>
<div style="position:absolute;left:665px;top:110px;width:257px;height:265px;border-left:1px solid #fff;border-top:1px solid #fff;border-right:1px solid #8a8680;border-bottom:1px solid #8a8680"></div>
<div style="position:absolute;left:665px;top:89px;width:50px;height:22px;background:#d4d0c8;border-left:1px solid #fff"></div>
<div class="t" style="left:673.6px;top:93px;">General</div>
<div class="t" style="left:600px;width:142px;text-align:right;top:119.6px">Interface</div>
<div class="inp" style="left:748px;top:117.2px;width:149px;height:17px;background:#fff"></div>
<div class="t" style="left:751.7px;top:119.69999999999999px;font-style:italic">wlan1</div>
<div class="btn" style="left:897.5px;top:117.2px;width:15.5px;height:17px;border-color:#8a8680"></div>
<svg style="position:absolute;left:897.5px;top:117.2px" width="16" height="17"><path d="M4.5 4.5h7" stroke="#000" stroke-width="1.2"/><path d="M6.5 6h3v3h2.5l-4 4l-4-4h2.5z" fill="#000"/></svg>
<div class="t" style="left:600px;width:142px;text-align:right;top:143.2px">Bridge</div>
<div class="inp" style="left:748px;top:141px;width:149px;height:17px;background:#fff"></div>
<div class="t" style="left:751.7px;top:143.5px;">bridge1</div>
<div class="btn" style="left:897.5px;top:141px;width:15.5px;height:17px;border-color:#8a8680"></div>
<svg style="position:absolute;left:897.5px;top:141px" width="16" height="17"><path d="M4.5 4.5h7" stroke="#000" stroke-width="1.2"/><path d="M6.5 6h3v3h2.5l-4 4l-4-4h2.5z" fill="#000"/></svg>
<div class="sep" style="left:674px;top:166px;width:239px"></div>
<div class="t" style="left:600px;width:142px;text-align:right;top:175.8px">Priority</div>
<div class="inp" style="left:748px;top:173.3px;width:142px;height:17px;background:#fff"></div>
<div class="t" style="left:751.7px;top:175.8px;">80</div>
<div class="t" style="left:895px;top:176px;">hex</div>
<div class="t" style="left:600px;width:142px;text-align:right;top:198.8px">Path Cost</div>
<div class="inp" style="left:748px;top:196.4px;width:165px;height:17px;background:#fff"></div>
<div class="t" style="left:751.7px;top:198.9px;">10</div>
<div class="t" style="left:600px;width:142px;text-align:right;top:222.5px">Horizon</div>
<div class="inp" style="left:748px;top:220.2px;width:149px;height:17px;background:#d4d0c8"></div>
<svg style="position:absolute;left:900px;top:225px" width="12" height="7"><path d="M0.8 0.5h10l-5 6z" fill="#000"/></svg>
<div class="sep" style="left:674px;top:245px;width:239px"></div>
<div class="t" style="left:600px;width:142px;text-align:right;top:255.8px">Edge</div>
<div class="inp" style="left:748px;top:253.4px;width:149px;height:17px;background:#fff"></div>
<div class="t" style="left:751.7px;top:255.89999999999998px;">auto</div>
<div class="btn" style="left:897.5px;top:253.4px;width:15.5px;height:17px;border-color:#8a8680"></div>
<svg style="position:absolute;left:897.5px;top:253.4px" width="16" height="17"><path d="M4.5 4.5h7" stroke="#000" stroke-width="1.2"/><path d="M6.5 6h3v3h2.5l-4 4l-4-4h2.5z" fill="#000"/></svg>
<div class="t" style="left:600px;width:142px;text-align:right;top:279px">Point To Point</div>
<div class="inp" style="left:748px;top:276.5px;width:149px;height:17px;background:#fff"></div>
<div class="t" style="left:751.7px;top:279.0px;">auto</div>
<div class="btn" style="left:897.5px;top:276.5px;width:15.5px;height:17px;border-color:#8a8680"></div>
<svg style="position:absolute;left:897.5px;top:276.5px" width="16" height="17"><path d="M4.5 4.5h7" stroke="#000" stroke-width="1.2"/><path d="M6.5 6h3v3h2.5l-4 4l-4-4h2.5z" fill="#000"/></svg>
<div class="t" style="left:600px;width:142px;text-align:right;top:302px">External FDB</div>
<div class="inp" style="left:748px;top:299.6px;width:149px;height:17px;background:#fff"></div>
<div class="t" style="left:751.7px;top:302.1px;">auto</div>
<div class="btn" style="left:897.5px;top:299.6px;width:15.5px;height:17px;border-color:#8a8680"></div>
<svg style="position:absolute;left:897.5px;top:299.6px" width="16" height="17"><path d="M4.5 4.5h7" stroke="#000" stroke-width="1.2"/><path d="M6.5 6h3v3h2.5l-4 4l-4-4h2.5z" fill="#000"/></svg>
<div class="sep" style="left:674px;top:324.4px;width:239px"></div>
<div class="inp" style="left:748px;top:332px;width:11px;height:11px"></div>
<div class="t" style="left:763px;top:332px;">Auto Isolate</div>
<div class="btn" style="left:931px;top:92.4px;width:62px;height:21px;border-color:#000;"></div>
<div class="t" style="left:931px;width:62px;text-align:center;top:96.9px">OK</div>
<div class="btn" style="left:931px;top:116.2px;width:62px;height:21px;"></div>
<div class="t" style="left:931px;width:62px;text-align:center;top:120.7px">Cancel</div>
<div class="btn" style="left:931px;top:141.2px;width:62px;height:21px;"></div>
<div class="t" style="left:931px;width:62px;text-align:center;top:145.7px">Apply</div>
<div class="btn" style="left:931px;top:170px;width:62px;height:21px;"></div>
<div class="t" style="left:931px;width:62px;text-align:center;top:174.5px">Disable</div>
<div class="btn" style="left:931px;top:194.3px;width:62px;height:21px;"></div>
<div class="t" style="left:931px;width:62px;text-align:center;top:198.8px">Comment</div>
<div class="btn" style="left:931px;top:218.8px;width:62px;height:21px;"></div>
<div class="t" style="left:931px;width:62px;text-align:center;top:223.3px">Copy</div>
<div class="btn" style="left:931px;top:242.9px;width:62px;height:21px;"></div>
<div class="t" style="left:931px;width:62px;text-align:center;top:247.4px">Remove</div>
<div class="t" style="left:922px;top:91.2px;color:#f01010;font-size:15px;line-height:15px;height:15px">2</div>
<div style="position:absolute;left:665px;top:376px;width:163px;height:18px;border:1px solid #8a8680;border-right-color:#fff;border-bottom-color:#fff"></div>
<div class="t" style="left:668px;top:379px;">enabled</div>
<div style="position:absolute;left:830px;top:376px;width:166px;height:18px;border:1px solid #8a8680;border-right-color:#fff;border-bottom-color:#fff"></div>
<div class="t" style="left:832px;top:379px;">inactive</div>
<div style="position:absolute;left:662px;top:397px;width:338px;height:329px;background:#000"></div>
<div style="position:absolute;left:664px;top:399px;width:336px;height:327px;background:#d4d0c8"></div>
<div style="position:absolute;left:664px;top:399px;width:336px;height:19px;background:#5050cd"></div>
<div class="t" style="left:668px;top:403.5px;color:#ffffff;letter-spacing:0.1px">Bridge Port &lt;ether1&gt;</div>
<div style="position:absolute;left:967px;top:402.3px;width:14px;height:14px;border:1px solid #303030;background:#e2ded6;box-shadow:inset 1px 1px 0 #fff"></div>
<div style="position:absolute;left:983px;top:402.3px;width:14px;height:14px;border:1px solid #303030;background:#e2ded6;box-shadow:inset 1px 1px 0 #fff"></div>
<svg style="position:absolute;left:967px;top:402.3px" width="14" height="14"><path d="M3.5 3.5h7v7h-7z" fill="none" stroke="#2a2a2a" stroke-width="1"/><path d="M3 3.5h8" stroke="#2a2a2a" stroke-width="2"/></svg>
<svg style="position:absolute;left:983px;top:402.3px" width="14" height="14"><path d="M4 4l6 6M10 4l-6 6" stroke="#2a2a2a" stroke-width="1.8"/></svg>
<div style="position:absolute;left:716px;top:421.6px;width:40px;height:20px;background:#c5c1b9;border-left:1px solid #8a8680;border-top:1px solid #e8e5df;border-right:1px solid #9c9890"></div>
<div class="t" style="left:721.4px;top:425.7px;">Status</div>
<div style="position:absolute;left:666px;top:441px;width:257px;height:265px;border-left:1px solid #fff;border-top:1px solid #fff;border-right:1px solid #8a8680;border-bottom:1px solid #8a8680"></div>
<div style="position:absolute;left:666px;top:420px;width:50px;height:22px;background:#d4d0c8;border-left:1px solid #fff"></div>
<div class="t" style="left:673.6px;top:424px;">General</div>
<div class="t" style="left:601px;width:142px;text-align:right;top:450.6px">Interface</div>
<div class="inp" style="left:749px;top:448.2px;width:148px;height:17px;background:#fff"></div>
<div style="position:absolute;left:751.7px;top:450.2px;width:145px;height:12.5px;background:#0a246a"></div>
<div class="t" style="left:753px;top:451.0px;color:#fff">ether1</div>
<div class="btn" style="left:898.5px;top:448.2px;width:15.5px;height:17px;border-color:#8a8680"></div>
<svg style="position:absolute;left:898.5px;top:448.2px" width="16" height="17"><path d="M6.3 5h3.4v3.3h2.6l-4.3 4.2l-4.3-4.2h2.6z" fill="#000"/></svg>
<div class="t" style="left:601px;width:142px;text-align:right;top:474.2px">Bridge</div>
<div class="inp" style="left:749px;top:472px;width:148px;height:17px;background:#fff"></div>
<div class="t" style="left:752.7px;top:474.5px;">bridge1</div>
<div class="btn" style="left:898.5px;top:472px;width:15.5px;height:17px;border-color:#8a8680"></div>
<svg style="position:absolute;left:898.5px;top:472px" width="16" height="17"><path d="M4.5 4.5h7" stroke="#000" stroke-width="1.2"/><path d="M6.5 6h3v3h2.5l-4 4l-4-4h2.5z" fill="#000"/></svg>
<div class="sep" style="left:675px;top:497px;width:239px"></div>
<div class="t" style="left:601px;width:142px;text-align:right;top:506.8px">Priority</div>
<div class="inp" style="left:749px;top:504.3px;width:141px;height:17px;background:#fff"></div>
<div class="t" style="left:752.7px;top:506.79999999999995px;">80</div>
<div class="t" style="left:896px;top:507px;">hex</div>
<div class="t" style="left:601px;width:142px;text-align:right;top:529.8px">Path Cost</div>
<div class="inp" style="left:749px;top:527.4px;width:164px;height:17px;background:#fff"></div>
<div class="t" style="left:752.7px;top:529.9px;">10</div>
<div class="t" style="left:601px;width:142px;text-align:right;top:553.5px">Horizon</div>
<div class="inp" style="left:749px;top:551.2px;width:148px;height:17px;background:#d4d0c8"></div>
<svg style="position:absolute;left:901px;top:556px" width="12" height="7"><path d="M0.8 0.5h10l-5 6z" fill="#000"/></svg>
<div class="sep" style="left:675px;top:576px;width:239px"></div>
<div class="t" style="left:601px;width:142px;text-align:right;top:586.8px">Edge</div>
<div class="inp" style="left:749px;top:584.4px;width:148px;height:17px;background:#fff"></div>
<div class="t" style="left:752.7px;top:586.9px;">auto</div>
<div class="btn" style="left:898.5px;top:584.4px;width:15.5px;height:17px;border-color:#8a8680"></div>
<svg style="position:absolute;left:898.5px;top:584.4px" width="16" height="17"><path d="M4.5 4.5h7" stroke="#000" stroke-width="1.2"/><path d="M6.5 6h3v3h2.5l-4 4l-4-4h2.5z" fill="#000"/></svg>
<div class="t" style="left:601px;width:142px;text-align:right;top:610px">Point To Point</div>
<div class="inp" style="left:749px;top:607.5px;width:148px;height:17px;background:#fff"></div>
<div class="t" style="left:752.7px;top:610.0px;">auto</div>
<div class="btn" style="left:898.5px;top:607.5px;width:15.5px;height:17px;border-color:#8a8680"></div>
<svg style="position:absolute;left:898.5px;top:607.5px" width="16" height="17"><path d="M4.5 4.5h7" stroke="#000" stroke-width="1.2"/><path d="M6.5 6h3v3h2.5l-4 4l-4-4h2.5z" fill="#000"/></svg>
<div class="t" style="left:601px;width:142px;text-align:right;top:633px">External FDB</div>
<div class="inp" style="left:749px;top:630.6px;width:148px;height:17px;background:#fff"></div>
<div class="t" style="left:752.7px;top:633.1px;">auto</div>
<div class="btn" style="left:898.5px;top:630.6px;width:15.5px;height:17px;border-color:#8a8680"></div>
<svg style="position:absolute;left:898.5px;top:630.6px" width="16" height="17"><path d="M6.3 5h3.4v3.3h2.6l-4.3 4.2l-4.3-4.2h2.6z" fill="#000"/></svg>
<div class="sep" style="left:675px;top:655.4px;width:239px"></div>
<div class="inp" style="left:749px;top:663px;width:11px;height:11px"></div>
<div class="t" style="left:764px;top:663px;">Auto Isolate</div>
<div class="btn" style="left:932px;top:423.4px;width:62px;height:21px;border-color:#000;"></div>
<div class="t" style="left:932px;width:62px;text-align:center;top:427.9px">OK</div>
<div class="btn" style="left:932px;top:447.2px;width:62px;height:21px;"></div>
<div class="t" style="left:932px;width:62px;text-align:center;top:451.7px">Cancel</div>
<div class="btn" style="left:932px;top:472.2px;width:62px;height:21px;"></div>
<div class="t" style="left:932px;width:62px;text-align:center;top:476.7px">Apply</div>
<div class="btn" style="left:932px;top:501px;width:62px;height:21px;"></div>
<div class="t" style="left:932px;width:62px;text-align:center;top:505.5px">Disable</div>
<div class="btn" style="left:932px;top:525.3px;width:62px;height:21px;"></div>
<div class="t" style="left:932px;width:62px;text-align:center;top:529.8px">Comment</div>
<div class="btn" style="left:932px;top:549.8px;width:62px;height:21px;"></div>
<div class="t" style="left:932px;width:62px;text-align:center;top:554.3px">Copy</div>
<div class="btn" style="left:932px;top:573.9px;width:62px;height:21px;"></div>
<div class="t" style="left:932px;width:62px;text-align:center;top:578.4px">Remove</div>
<div class="t" style="left:923px;top:419.2px;color:#f01010;font-size:15.5px;line-height:15px;height:15px">3</div>
<div style="position:absolute;left:666px;top:707px;width:163px;height:18px;border:1px solid #8a8680;border-right-color:#fff;border-bottom-color:#fff"></div>
<div class="t" style="left:669px;top:710px;">enabled</div>
<div style="position:absolute;left:830px;top:707px;width:166px;height:18px;border:1px solid #8a8680;border-right-color:#fff;border-bottom-color:#fff"></div>
<div class="t" style="left:832px;top:710px;color:#a8a49c">inactive</div>
</body></html>
